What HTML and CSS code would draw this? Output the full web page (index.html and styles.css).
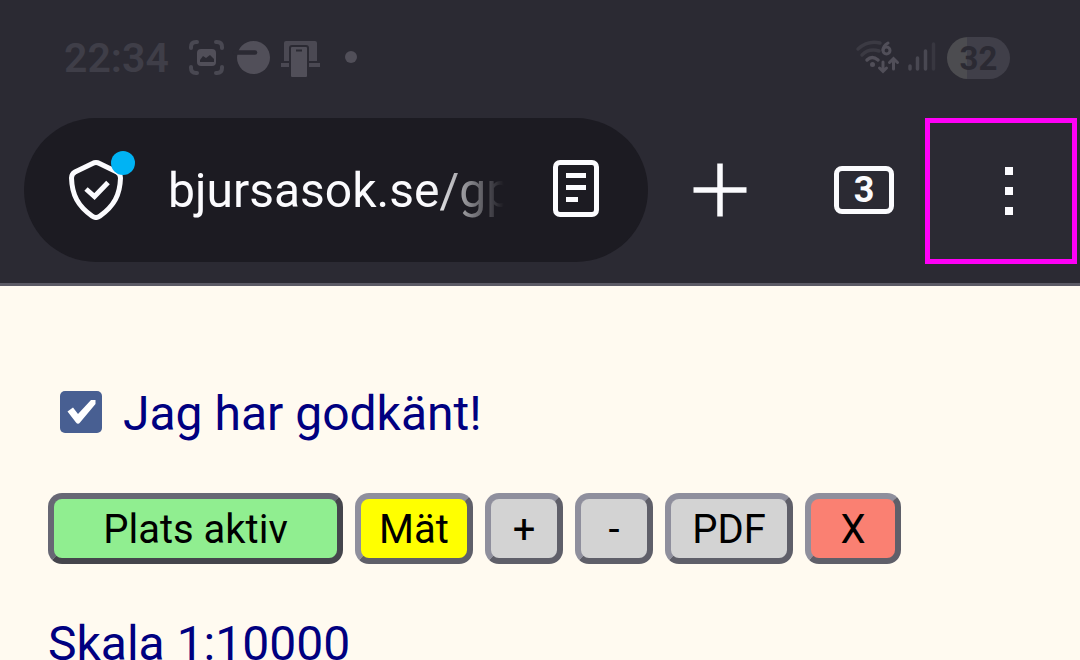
FILE: index.html
```html
<!DOCTYPE html>
<html lang="sv">
<head>
<meta charset="utf-8">
<meta name="viewport" content="width=device-width, initial-scale=1">
<title>bjursasok.se</title>
<link rel="stylesheet" href="styles.css">
</head>
<body>
<header class="browser">
  <div class="status">
    <span class="clock">22:34</span>
    <svg class="status-icons" width="174" height="40" viewBox="186 38 174 40" aria-hidden="true">
      <g fill="none" stroke="#494852" stroke-width="4" stroke-linecap="round">
        <path d="M190 48v-1q0-5 5-5h1M215 42h1q5 0 5 5v1M221 67v1q0 5-5 5h-1M196 73h-1q-5 0-5-5v-1"/>
      </g>
      <rect x="196" y="49" width="19" height="17" rx="4" fill="#514f59"/>
      <path d="M199 62v-2l3-4 3 2 4-3 4 4v3z" fill="#2b2a33"/>
      <circle cx="252.500" cy="57.500" r="16.500" fill="#514f59"/>
      <path d="M234 52.500H254" stroke="#2b2a33" stroke-width="4.500" stroke-linecap="round"/>
      <path d="M285 41H314Q316 41 316 43V62H319V67H280V62H283V43Q283 41 285 41z" fill="#4b4953"/>
      <path d="M280 62H319" stroke="#2b2a33" stroke-width="2"/>
      <rect x="288" y="45" width="20" height="34" rx="3" fill="#2b2a33"/>
      <rect x="290" y="47" width="16" height="30" rx="1" fill="#514f59"/>
      <path d="M295 50.500h6" stroke="#2b2a33" stroke-width="2"/>
      <circle cx="350" cy="57" r="6" fill="#514f59"/>
    </svg>
    <svg class="signal" width="81" height="40" viewBox="855 38 81 40" aria-hidden="true">
      <g fill="none" stroke-linecap="round" stroke-width="3.500">
        <path d="M858 49Q868 40 880 43M862 55Q869 48 879 51" stroke="#3b3a43"/>
        <path d="M867 60Q872 55 878 60" stroke="#514f59"/>
        <path d="M888 43Q883 46 883 50" stroke="#514f59" stroke-width="3"/>
        <circle cx="886.500" cy="50.500" r="3.500" stroke="#514f59" stroke-width="3"/>
        <path d="M883 62V71M879.500 68l3.500 3.500 3.500-3.500M893.500 69V59M889.500 62.500l4-4 4 4" stroke="#514f59" stroke-width="3"/>
        <path d="M910 66V69M917.500 58V69M925.500 51V69" stroke="#494852"/>
        <path d="M933.500 44V69" stroke="#383740"/>
      </g>
      <circle cx="872.500" cy="64.500" r="2.500" fill="#514f59"/>
    </svg>
    <span class="battery">32</span>
  </div>
  <div class="toolbar">
    <div class="address">
      <button class="icon-button site-info" aria-label="Webbplatsinformation">
        <svg width="72" height="72" viewBox="66 148 72 72" aria-hidden="true">
          <path d="M92.500 163.500Q96 161.500 99.500 163.500L117 172Q120.500 174 120.500 178C120 195 114 206 100 216Q96 219 92 216C78 206 72 195 71.500 178Q71.500 174 75 172z" fill="none" stroke="#fbfbfe" stroke-width="5"/>
          <path d="M86 189L94.500 196.500L108 182.500" fill="none" stroke="#fbfbfe" stroke-width="5"/>
          <circle cx="123" cy="163" r="12" fill="#00b3f4"/>
        </svg>
      </button>
      <input class="url" type="text" value="bjursasok.se/gp" aria-label="Adress">
      <button class="icon-button" aria-label="Läsarvy">
        <svg width="48" height="60" viewBox="552 160 48 60" aria-hidden="true">
          <rect x="555.500" y="162.500" width="41" height="52" rx="4.500" fill="none" stroke="#fbfbfe" stroke-width="5"/>
          <path d="M566 175.500h20M566 187.500h20M566 199.500h12" stroke="#fbfbfe" stroke-width="5"/>
        </svg>
      </button>
    </div>
    <button class="icon-button new-tab" aria-label="Ny flik">
      <svg width="54" height="54" viewBox="0 0 54 54" aria-hidden="true">
        <path d="M27 0.500V53.500M0.500 27H53.500" stroke="#fbfbfe" stroke-width="5.500"/>
      </svg>
    </button>
    <button class="icon-button tabs" aria-label="3 flikar"><span class="tab-count">3</span></button>
    <button class="icon-button menu" aria-label="Meny">
      <svg width="8" height="48" viewBox="0 0 8 48" aria-hidden="true">
        <path d="M0 0h8v8H0zM0 20h8v8H0zM0 40h8v8H0z" fill="#fbfbfe"/>
      </svg>
    </button>
  </div>
</header>
<main class="page">
  <label class="consent"><input class="tick" type="checkbox" checked>Jag har godkänt!</label>
  <div class="actions">
    <button class="action active">Plats aktiv</button>
    <button class="action measure">Mät</button>
    <button class="action">+</button>
    <button class="action">-</button>
    <button class="action pdf">PDF</button>
    <button class="action close">X</button>
  </div>
  <p class="scale">Skala 1:10000</p>
</main>
</body>
</html>
```
FILE: styles.css
```css
* {
  box-sizing: border-box;
}

body {
  margin: 0;
  height: 100vh;
  display: flex;
  flex-direction: column;
  background: #fffaf0;
  font-family: Roboto, "Liberation Sans", sans-serif;
}

.browser {
  flex: none;
  padding-bottom: 19px;
  background: #2b2a33;
  border-bottom: 3px solid #5b5a65;
}

.status {
  display: flex;
  align-items: center;
  height: 118px;
  padding: 0 70px 2px 64px;
}

.clock {
  color: #3f3e48;
  font-size: 41px;
  font-weight: 600;
}

.status-icons {
  margin-left: 18px;
}

.signal {
  margin-left: auto;
}

.battery {
  display: flex;
  align-items: center;
  justify-content: center;
  width: 63px;
  height: 42px;
  margin-left: 11px;
  border-radius: 21px;
  background: linear-gradient(to right, #4c4c50 20px, #403f49 20px);
  color: #2b2a33;
  font-size: 33px;
  font-weight: 700;
}

.toolbar {
  display: flex;
  align-items: flex-start;
  padding: 0 3px 0 24px;
}

.address {
  flex: 1;
  min-width: 0;
  display: flex;
  align-items: center;
  height: 144px;
  padding: 0 48px 0 42px;
  border-radius: 72px;
  background: #1c1b22;
}

.icon-button {
  flex: none;
  display: flex;
  align-items: center;
  justify-content: center;
  padding: 0;
  border: 0;
  background: none;
  color: #fbfbfe;
  font-family: inherit;
}

.site-info {
  padding-bottom: 12px;
}

.url {
  flex: 1;
  min-width: 0;
  height: 72px;
  margin: 0 48px 0 30px;
  padding: 0;
  border: 0;
  background: none;
  color: #fbfbfe;
  font-family: inherit;
  font-size: 48px;
  mask-image: linear-gradient(to left, transparent, #000 72px);
}

.new-tab {
  width: 144px;
  height: 144px;
}

.tabs {
  width: 133px;
  height: 144px;
  padding-left: 11px;
}

.tab-count {
  width: 60px;
  height: 48px;
  border: 5px solid #fbfbfe;
  border-radius: 8px;
  font-size: 36px;
  font-weight: 700;
  line-height: 38px;
}

.menu {
  width: 152px;
  height: 146px;
  padding-left: 16px;
  border: 5px solid #ff00f7;
}

.page {
  flex: 1;
  min-height: 0;
  overflow: hidden;
  padding: 100px 48px 0;
  color: #000080;
  font-size: 48px;
  line-height: 56px;
}

.consent {
  display: flex;
  align-items: center;
  gap: 21px;
  padding-left: 12px;
}

.tick {
  appearance: none;
  width: 42px;
  height: 42px;
  margin: 0 0 4px;
  border-radius: 5px;
  background: #485f92 url("data:image/svg+xml,%3Csvg xmlns='http://www.w3.org/2000/svg' viewBox='0 0 42 42'%3E%3Cpath d='M7.500 20.500L13 16.500L18 23L31 9H35.500V13L20 31.500Q18 34 16 31.500z' fill='white'/%3E%3C/svg%3E");
}

.actions {
  display: flex;
  gap: 12px;
  margin: 51px 0 52px;
}

.action {
  min-width: 78px;
  height: 71px;
  padding: 2px 12px 0;
  border: 6px solid;
  border-color: #8f8f9d #5f5f69 #5f5f69 #8f8f9d;
  border-radius: 14px;
  background: #d3d3d3;
  color: #000;
  font-family: inherit;
  font-size: 40px;
}

.active {
  width: 295px;
  border-color: #676774 #45454c #45454c #676774;
  background: #90ee90;
}

.measure {
  width: 118px;
  background: #ff0;
}

.pdf {
  width: 128px;
}

.close {
  width: 96px;
  background: #fa8072;
}

.scale {
  margin: 0;
}
```
